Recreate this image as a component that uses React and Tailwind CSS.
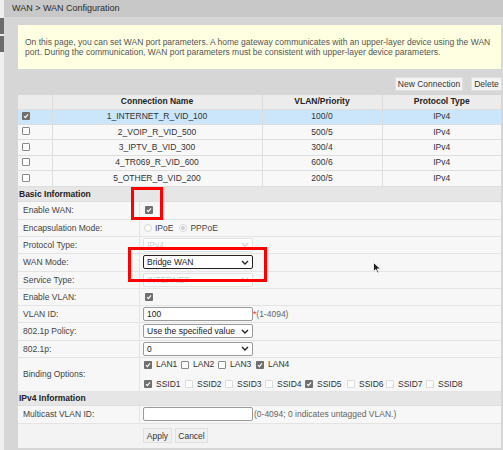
import React from 'react'

const Box = ({ checked, faint }) => (
    checked ? (
        <span className="inline-flex items-center justify-center w-[8px] h-[8px] rounded-[1px] bg-[#6f6f6f]">
            <svg width="6" height="6" viewBox="0 0 6 6"><path d="M1 3.2 L2.4 4.6 L5 1.4" stroke="#fff" strokeWidth="1.2" fill="none" /></svg>
        </span>
    ) : (
        <span className={"inline-block w-[8px] h-[8px] rounded-[1px] bg-white border " + (faint ? "border-[#dcdcdc]" : "border-[#8a8a8a]")} />
    )
)

const Chevron = ({ faint }) => (
    <svg width="8" height="5" viewBox="0 0 8 5"><path d="M1 1 L4 4 L7 1" stroke={faint ? "#d0d0d0" : "#222"} strokeWidth="1.4" fill="none" /></svg>
)

const Select = ({ value, faint, dark, w = "w-[110px]" }) => (
    <div className={"flex items-center justify-between h-[14px] px-[3px] bg-white rounded-[2px] border " + w + " " + (dark ? "border-[#222]" : faint ? "border-[#e2e2e2] bg-[#fbfbfb]" : "border-[#9a9a9a]")}>
        <span className={faint ? "text-[#cfcfcf]" : "text-[#222]"}>{value}</span>
        <Chevron faint={faint} />
    </div>
)

const Row = ({ label, children, h = "h-[17px]" }) => (
    <div className={"flex border-b border-[#e4e4e4] bg-[#f7f7f7] " + h}>
        <div className="w-[122px] shrink-0 flex items-center pl-[5px] border-r border-[#e4e4e4] text-[#444]">{label}</div>
        <div className="flex-1 flex items-center pl-[3px]">{children}</div>
    </div>
)

const Section = ({ title, h = "h-[15px]" }) => (
    <div className={"flex items-center pl-[1px] bg-[#e6e6e6] border-b border-[#dedede] font-bold text-[#222] " + h}>{title}</div>
)

const rows = [
    ["1_INTERNET_R_VID_100", "100/0", true],
    ["2_VOIP_R_VID_500", "500/5"],
    ["3_IPTV_B_VID_300", "300/4"],
    ["4_TR069_R_VID_600", "600/6"],
    ["5_OTHER_B_VID_200", "200/5"],
]

const Opt = ({ label, checked, faint, className = "" }) => (
    <span className={"flex items-center gap-[4px] " + className}>
        <Box checked={checked} faint={faint} />
        <span className="text-[#333]">{label}</span>
    </span>
)

export default function App() {
    return (
        <div className="relative w-[503px] h-[450px] overflow-hidden flex text-[8.5px] text-[#333]" style={{ fontFamily: '"Liberation Sans", Arial, sans-serif' }}>
            {/* left scroll strip */}
            <div className="w-[4px] shrink-0 bg-[#efefef] flex flex-col pt-[18px] gap-[2px]">
                <div className="h-[16px] bg-[#6b6b6b]" />
                <div className="h-[16px] bg-[#6b6b6b]" />
            </div>

            <div className="flex-1 flex flex-col">
                <div className="h-[17px] shrink-0 bg-[#c8c8c8] flex items-center pl-[8px] text-[9px] text-[#2a2a2a]">WAN &gt; WAN Configuration</div>

                <div className="flex-1 bg-[#d6d6d6] pl-[14px] pr-[2px] flex flex-col">
                    <div className="mt-[8px] h-[44px] bg-[#ffffe2] flex items-center px-[7px] leading-[10px] text-[#555]">
                        On this page, you can set WAN port parameters. A home gateway communicates with an upper-layer device using the WAN port. During the communication, WAN port parameters must be consistent with upper-layer device parameters.
                    </div>

                    <div className="flex justify-end gap-[8px] mt-[8px] mr-[-1px]">
                        <button className="h-[14px] w-[68px] bg-[#f3f3f3] border border-[#e0e0e0] text-[#333]">New Connection</button>
                        <button className="h-[14px] w-[31px] bg-[#f3f3f3] border border-[#e0e0e0] text-[#333]">Delete</button>
                    </div>

                    <table className="mt-[4px] w-full border-collapse table-fixed">
                        <colgroup>
                            <col className="w-[34px]" />
                            <col className="w-[210px]" />
                            <col className="w-[120px]" />
                            <col />
                        </colgroup>
                        <thead>
                            <tr className="h-[14px] bg-[#ececec]">
                                <th className="border-r border-[#dcdcdc]"></th>
                                <th className="border-r border-[#dcdcdc] font-bold text-[#222]">Connection Name</th>
                                <th className="border-r border-[#dcdcdc] font-bold text-[#222]">VLAN/Priority</th>
                                <th className="font-bold text-[#222]">Protocol Type</th>
                            </tr>
                        </thead>
                        <tbody>
                            {rows.map(([name, vlan, sel]) => (
                                <tr key={name} className={"h-[15.4px] border-t border-[#dedede] " + (sel ? "bg-[#cbe6fa]" : "bg-[#f8f8f8]")}>
                                    <td className="border-r border-[#dedede] pl-[4px] align-middle leading-none"><Box checked={sel} /></td>
                                    <td className="border-r border-[#dedede] text-center">{name}</td>
                                    <td className="border-r border-[#dedede] text-center">{vlan}</td>
                                    <td className="text-center">IPv4</td>
                                </tr>
                            ))}
                        </tbody>
                    </table>

                    <div className="flex flex-col border-t border-[#dedede]">
                        <Section title="Basic Information" />
                        <Row label="Enable WAN:" h="h-[18px]"><span className="ml-[2px] flex"><Box checked /></span></Row>
                        <Row label="Encapsulation Mode:">
                            <span className="flex items-center gap-[3px] ml-[1px]">
                                <span className="w-[8px] h-[8px] rounded-full border border-[#d6d6d6] bg-white" />
                                <span className="text-[#444]">IPoE</span>
                                <span className="w-[8px] h-[8px] rounded-full border border-[#d6d6d6] bg-white flex items-center justify-center ml-[3px]"><span className="w-[4px] h-[4px] rounded-full bg-[#cfcfcf]" /></span>
                                <span className="text-[#444]">PPPoE</span>
                            </span>
                        </Row>
                        <Row label="Protocol Type:"><Select value="IPv4" faint /></Row>
                        <Row label="WAN Mode:" h="h-[18px]"><Select value="Bridge WAN" dark /></Row>
                        <Row label="Service Type:"><Select value="INTERNET" faint /></Row>
                        <Row label="Enable VLAN:"><span className="ml-[2px] flex"><Box checked /></span></Row>
                        <Row label="VLAN ID:">
                            <div className="w-[110px] h-[14px] bg-white border border-[#9a9a9a] rounded-[2px] flex items-center px-[3px] text-[#222]">100</div>
                            <span className="text-[#e02020]">*</span><span className="text-[#666]">(1-4094)</span>
                        </Row>
                        <Row label="802.1p Policy:" h="h-[18px]"><Select value="Use the specified value" /></Row>
                        <Row label="802.1p:"><Select value="0" /></Row>
                        <Row label="Binding Options:" h="h-[34px]">
                            <div className="flex flex-col gap-[7px] pl-[1px]">
                                <div className="flex items-center">
                                    <Opt label="LAN1" checked className="w-[37px]" />
                                    <Opt label="LAN2" className="w-[37px]" />
                                    <Opt label="LAN3" className="w-[38px]" />
                                    <Opt label="LAN4" checked />
                                </div>
                                <div className="flex items-center">
                                    <Opt label="SSID1" checked className="w-[41px]" />
                                    <Opt label="SSID2" faint className="w-[40px]" />
                                    <Opt label="SSID3" faint className="w-[40px]" />
                                    <Opt label="SSID4" faint className="w-[40px]" />
                                    <Opt label="SSID5" checked className="w-[42px]" />
                                    <Opt label="SSID6" faint className="w-[39px]" />
                                    <Opt label="SSID7" faint className="w-[40px]" />
                                    <Opt label="SSID8" faint />
                                </div>
                            </div>
                        </Row>
                        <Section title="IPv4 Information" h="h-[14px]" />
                        <Row label="Multicast VLAN ID:" h="h-[18px]">
                            <div className="w-[110px] h-[14px] bg-white border border-[#9a9a9a] rounded-[2px]" />
                            <span className="text-[#666] ml-[1px]">(0-4094; 0 indicates untagged VLAN.)</span>
                        </Row>
                        <div className="h-[24px] bg-[#f3f3f3] flex items-center pl-[125px] gap-[3px]">
                            <button className="h-[15px] w-[29px] bg-[#f0f0f0] border border-[#e0e0e0] text-[#333]">Apply</button>
                            <button className="h-[15px] w-[33px] bg-[#f0f0f0] border border-[#e0e0e0] text-[#333]">Cancel</button>
                        </div>
                    </div>
                </div>
            </div>

            {/* red highlight boxes */}
            <div className="absolute left-[131px] top-[187px] w-[32px] h-[33px] border-[3px] border-[#ff0000]" />
            <div className="absolute left-[128px] top-[247px] w-[139px] h-[35px] border-[3px] border-[#ff0000]" />

            {/* mouse cursor */}
            <svg className="absolute left-[373px] top-[262px]" width="9" height="12" viewBox="0 0 9 12">
                <path d="M0.5 0.5 L0.5 9.5 L2.8 7.4 L4.5 11 L5.8 10.4 L4.2 6.9 L7.5 6.9 Z" fill="#222" stroke="#fff" strokeWidth="0.8" />
            </svg>
        </div>
    )
}
